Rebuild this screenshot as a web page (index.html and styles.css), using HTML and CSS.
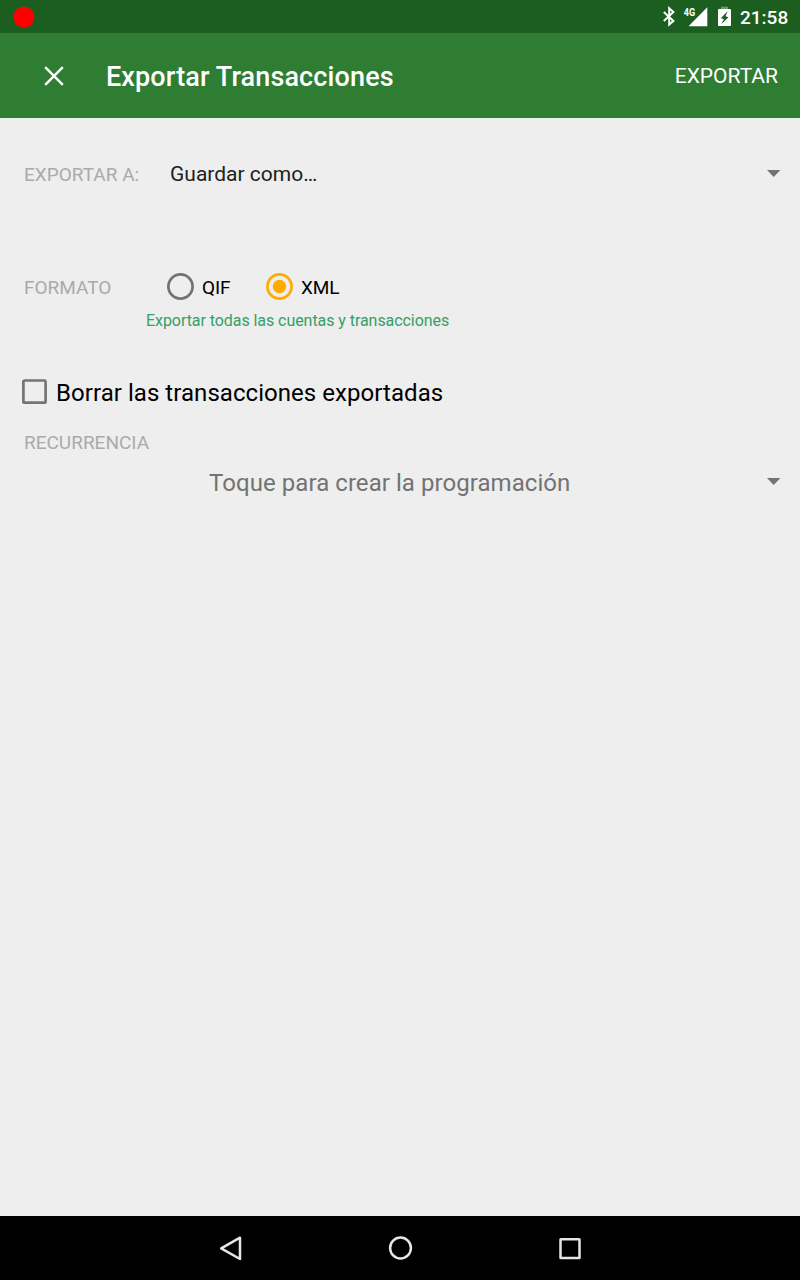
FILE: index.html
```html
<!DOCTYPE html>
<html lang="es">
<head>
<meta charset="utf-8">
<title>Exportar Transacciones</title>
<link rel="stylesheet" href="styles.css">
</head>
<body>
<div class="screen">
  <div class="status-bar">
    <svg class="record-dot" width="22" height="22" viewBox="0 0 22 22"><circle cx="11" cy="11" r="10.5" fill="#f00"/></svg>
    <svg class="status-icons" width="72" height="24" viewBox="0 0 72 24">
      <path d="M3.8 7 L13.4 15.9 L9.2 19.6 V3.2 L13.4 7.1 L3.8 16" fill="none" stroke="#fff" stroke-width="2"/>
      <path d="M47.3 2.2 V21.2 H28.5 Z" fill="#fff"/>
      <text class="network" x="23.8" y="10.9" textLength="11.4" lengthAdjust="spacingAndGlyphs">4G</text>
      <path d="M61 1.7 h7 v2.3 h-7z" fill="#6f986f"/>
      <path fill-rule="evenodd" d="M59 4 h11 q1 0 1 1 v15 q0 1 -1 1 h-11 q-1 0 -1 -1 v-15 q0 -1 1 -1z M67.8 6 L60.8 13.2 L63.9 14.1 L61.2 19.2 L68.5 12.2 L65.5 11.2z" fill="#fff"/>
    </svg>
    <span class="clock">21:58</span>
  </div>

  <header class="app-bar">
    <svg class="close" width="20" height="20" viewBox="0 0 20 20"><path d="M1.2 1.2 L18.8 18.8 M18.8 1.2 L1.2 18.8" stroke="#fff" stroke-width="2.5"/></svg>
    <h1 class="title">Exportar Transacciones</h1>
    <span class="action">EXPORTAR</span>
  </header>

  <main class="form">
    <div class="row destination">
      <span class="label">EXPORTAR A:</span>
      <span class="destination-value">Guardar como…</span>
      <svg class="caret" width="14" height="8" viewBox="0 0 14 8"><path d="M0 0.1 H13.4 L6.7 7.1z" fill="#737373"/></svg>
    </div>
    <div class="row format">
      <span class="label">FORMATO</span>
      <svg class="radio" width="28" height="28" viewBox="0 0 28 28"><circle cx="14.5" cy="13.5" r="12.1" fill="none" stroke="#737373" stroke-width="2.7"/></svg>
      <span class="option first">QIF</span>
      <svg class="radio" width="28" height="28" viewBox="0 0 28 28"><circle cx="14.5" cy="13.5" r="12.1" fill="none" stroke="#ffab00" stroke-width="2.7"/><circle cx="14.5" cy="13.5" r="6.7" fill="#ffab00"/></svg>
      <span class="option">XML</span>
    </div>
    <p class="hint">Exportar todas las cuentas y transacciones</p>
    <div class="row delete">
      <svg class="checkbox" width="26" height="26" viewBox="0 0 26 26"><rect x="2.4" y="1.5" width="22.2" height="22.2" rx="1.3" fill="none" stroke="#757575" stroke-width="2.7"/></svg>
      <span class="delete-label">Borrar las transacciones exportadas</span>
    </div>
    <div class="recurrence-title"><span class="label">RECURRENCIA</span></div>
    <div class="row recurrence">
      <span class="recurrence-value">Toque para crear la programación</span>
      <svg class="caret" width="14" height="8" viewBox="0 0 14 8"><path d="M0 0.1 H13.4 L6.7 7.1z" fill="#737373"/></svg>
    </div>
  </main>

  <nav class="nav-bar">
    <svg class="nav-icons" width="364" height="28" viewBox="0 0 364 28" fill="none" stroke="#e6e6e6" stroke-width="2.5" stroke-linejoin="round">
      <path d="M22 3.7 V25 L3.2 14.4z"/>
      <circle cx="182.5" cy="14" r="10.4"/>
      <rect x="342.5" y="5.2" width="19" height="18.8" rx="0.3"/>
    </svg>
  </nav>
</div>
</body>
</html>
```
FILE: styles.css
```css
body { margin: 0; font-family: Roboto, sans-serif; }
svg { display: block; flex: none; }
.screen { width: 800px; height: 1280px; display: flex; flex-direction: column; background: #eee; white-space: nowrap; overflow: hidden; }
.status-bar { height: 33px; flex: none; display: flex; align-items: center; box-sizing: border-box; padding-left: 13px; background: #1b5e20; color: #fff; }
.status-icons { margin-left: 625px; }
.network { font: 700 10.5px Roboto, sans-serif; fill: #fff; }
.clock { margin: 2px 0 0 8px; font-size: 19px; font-weight: 500; line-height: 24px; }
.app-bar { height: 85px; flex: none; display: flex; align-items: center; box-sizing: border-box; padding: 0 22px 0 44px; background: #2e7d32; color: #fff; }
.close { margin-top: 1px; }
.title { flex: 1; margin: 2px 0 0 42px; font-size: 27px; font-weight: 500; line-height: 32px; letter-spacing: 0.12px; }
.action { font-size: 21px; line-height: 26px; margin-top: 1px; }
.form { flex: 1; }
.row { display: flex; align-items: center; }
.label { font-size: 19px; color: #aaa; line-height: 22px; }
.caret { margin: 0 19px 0 auto; }
.destination { height: 111px; padding-left: 24px; }
.destination .label { width: 146px; margin-top: 2px; }
.destination-value { font-size: 21px; line-height: 26px; color: #212121; margin-top: 1px; }
.format { height: 48px; padding: 34px 0 0 24px; }
.format .label { width: 142px; margin-top: 2px; }
.radio { margin-right: 8px; }
.option { margin-top: 2px; font-size: 19px; line-height: 22px; color: #000; letter-spacing: -0.1px; }
.option.first { width: 63px; }
.hint { margin: 0 0 0 146px; font-size: 16px; line-height: 20px; color: #34a065; letter-spacing: -0.06px; }
.delete { height: 48px; padding: 37px 0 0 21px; }
.delete-label { margin: 2px 0 0 9px; font-size: 24px; line-height: 28px; color: #000; letter-spacing: 0.05px; }
.recurrence-title { display: flex; padding: 16px 0 0 24px; }
.recurrence { height: 56px; }
.recurrence-value { margin: 2px 0 0 209px; font-size: 24px; line-height: 28px; color: #737373; letter-spacing: 0.06px; }
.nav-bar { height: 64px; flex: none; display: flex; align-items: center; background: #000; }
.nav-icons { margin-left: 218px; }
```
